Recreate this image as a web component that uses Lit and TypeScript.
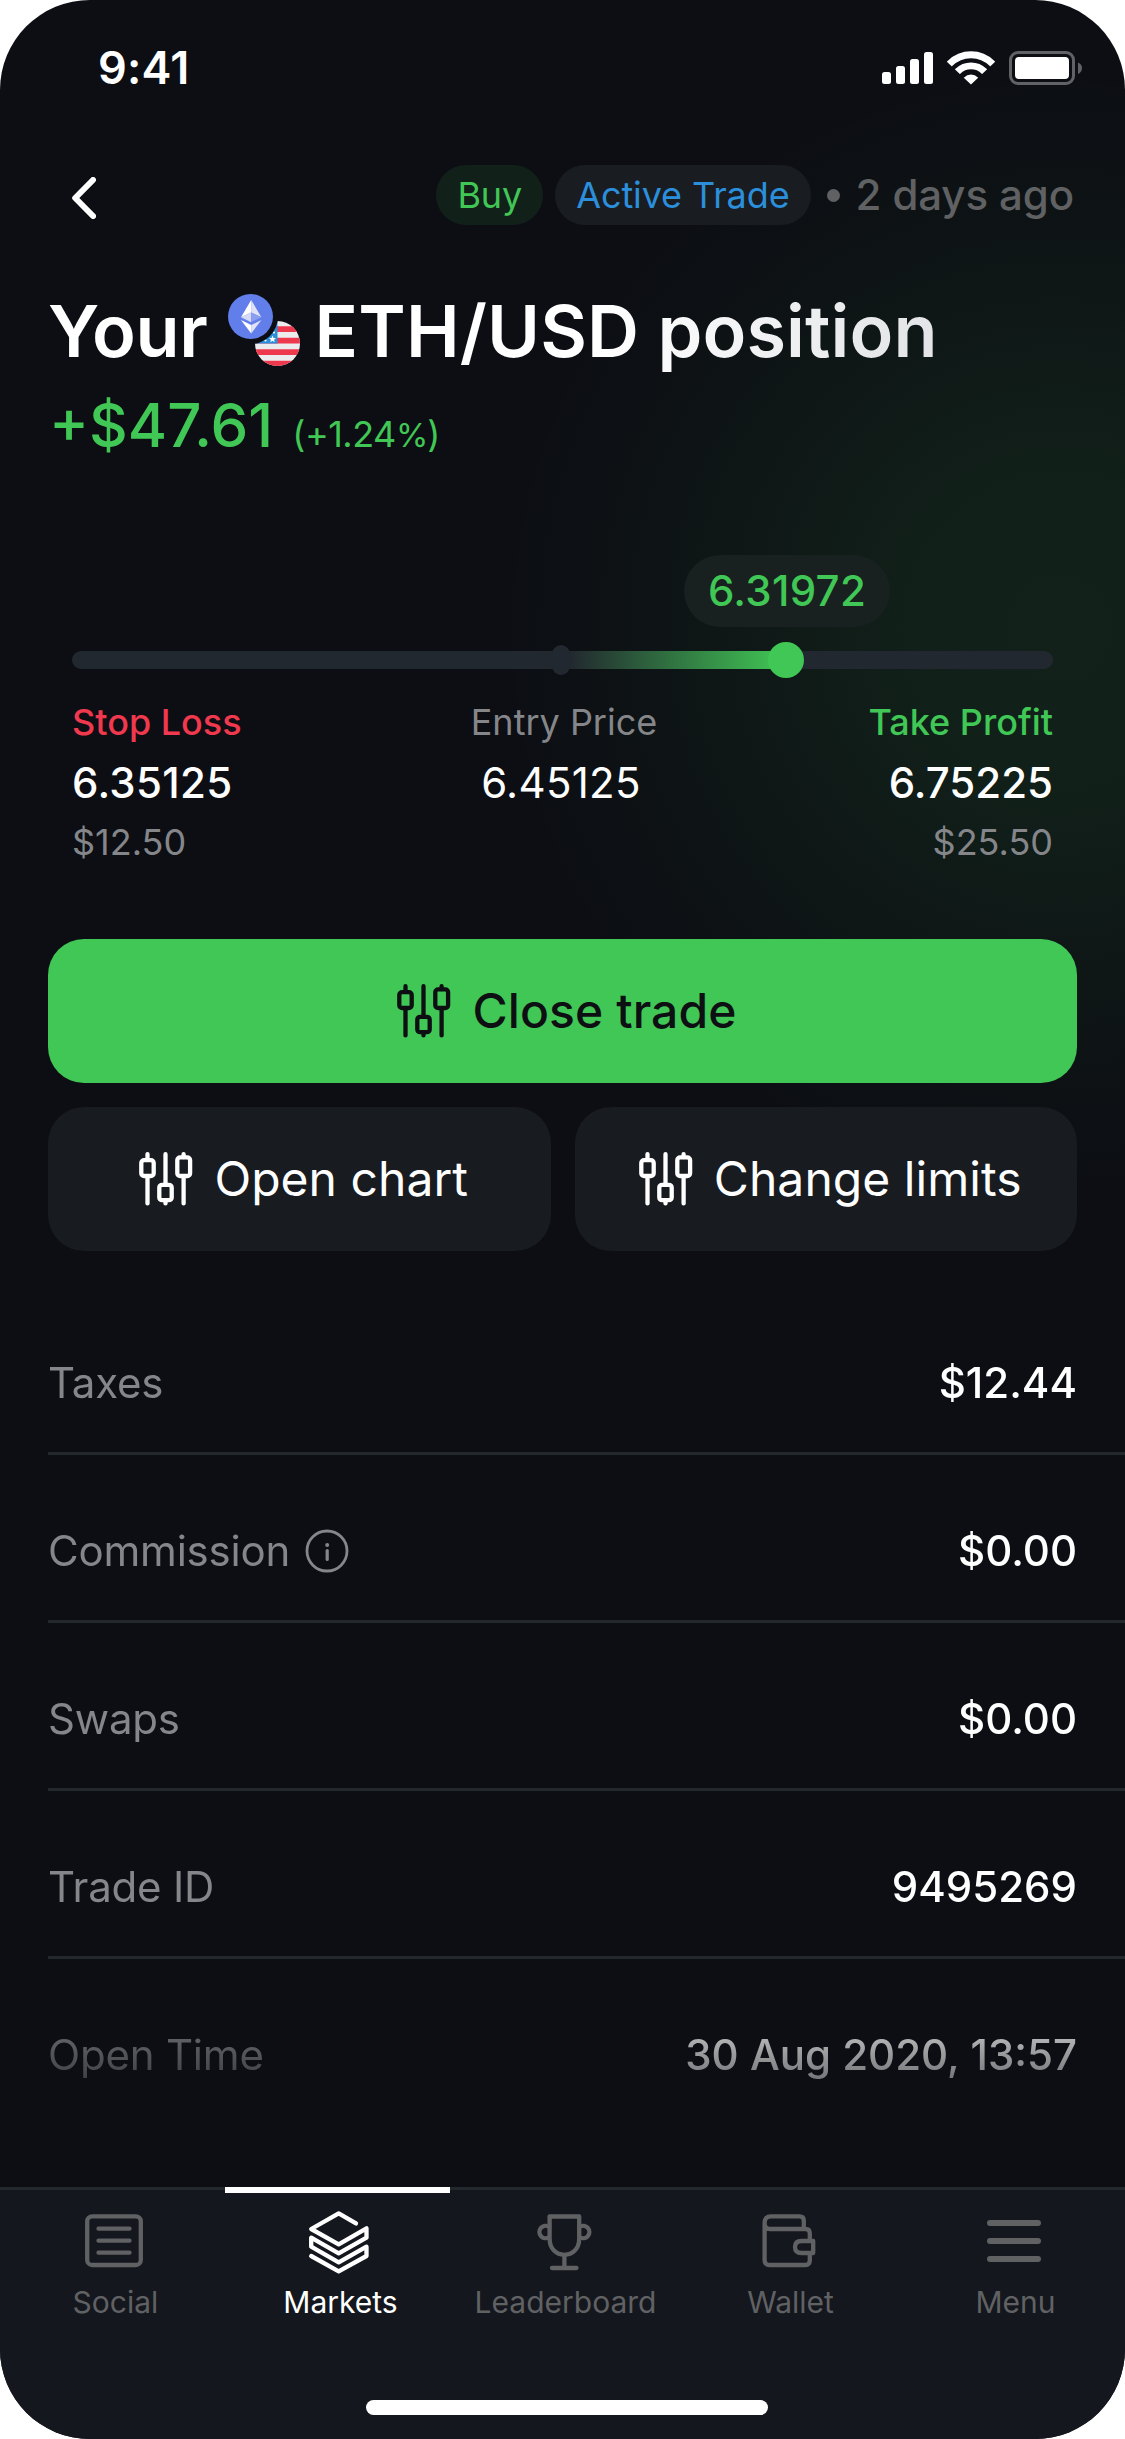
import { LitElement, html, css, svg } from "lit";
import { customElement, property } from "lit/decorators.js";
import { classMap } from "lit/directives/class-map.js";

const fontStack = css`Inter, "Liberation Sans", sans-serif`;

interface DetailRow {
  label: string;
  value: string;
  info?: boolean;
}

const rows: DetailRow[] = [
  { label: "Taxes", value: "$12.44" },
  { label: "Commission", value: "$0.00", info: true },
  { label: "Swaps", value: "$0.00" },
  { label: "Trade ID", value: "9495269" },
  { label: "Open Time", value: "30 Aug 2020, 13:57" },
];

const tabIcons: Record<string, unknown> = {
  Social: svg`
    <rect x="3.2" y="5.4" width="53.6" height="48.6" rx="5"/>
    <path d="M14.5 17.7H45.5M14.5 29.7H45.5M14.5 41.7H45.5"/>`,
  Markets: svg`
    <path d="M47 12.4 29.7 2.3 2.2 18 29.7 33.3 57.5 17.3V26.7L29.7 42.3 2.2 26.7V35.7L29.7 51.3 57.5 35.7V45L29.7 60.3 2.2 45"/>`,
  Leaderboard: svg`
    <path d="M15.6 5.5H45.2V27.5C45.2 38 38.5 43.8 30.4 43.8S15.6 38 15.6 27.5ZM30.4 44V57M18 57H42.5"/>
    <path d="M15 26.2A6.2 6.2 0 1 1 15 15.8M45.8 26.2A6.2 6.2 0 1 0 45.8 15.8"/>`,
  Wallet: svg`
    <path d="M5.6 12V49Q5.6 54 10.6 54H46.5Q50.8 54 50.8 49.5V44.5M5.6 12Q5.6 5.4 12 5.4H40.5Q44.8 5.4 44.8 9.7V17.6M5.6 12Q5.6 18 11 18H46.5Q50.8 18 50.8 22.3V28"/>
    <path d="M54.2 30H42.5Q36 30 36 36T42.5 42H54.2Z"/>`,
  Menu: svg`<path stroke-width="6" d="M6 12H54M6 30H54M6 48H54"/>`,
};

@customElement("sliders-icon")
class SlidersIcon extends LitElement {
  static styles = css`
    :host { display: block; width: 54px; height: 54px; }
    .icon { display: block; overflow: visible; }
  `;
  render() {
    return html`<svg class="icon" width="54" height="54" viewBox="0 0 54 54" fill="none"
      stroke="currentColor" stroke-width="4.3" stroke-linecap="round">
      <rect x="2.3" y="8.2" width="12.4" height="15.8" rx="2.8"/>
      <rect x="20.3" y="32.8" width="12.4" height="15.4" rx="2.8"/>
      <rect x="38.3" y="5.4" width="12.8" height="18.6" rx="2.8"/>
      <path d="M8.5 2.2V7M8.5 25V51.4M26.5 2.2V32M26.5 49V51.4M44.6 2.2V5M44.6 25V51.4"/>
    </svg>`;
  }
}

@customElement("trade-button")
class TradeButton extends LitElement {
  @property() label = "";
  @property({ type: Boolean }) primary = false;
  static styles = css`
    :host { display: block; flex: 1; }
    .button {
      display: flex; align-items: center; justify-content: center; gap: 21px;
      width: 100%; height: 144px; border: 0; border-radius: 36px; padding: 0 0 0 9px;
      background: #181b20; color: #fff;
      font: 400 48px/60px ${fontStack}; letter-spacing: 0.05px;
    }
    .primary { background: #41c755; color: #0d0f13; font-weight: 500; letter-spacing: 0.1px; }
  `;
  render() {
    return html`<button class=${classMap({ button: true, primary: this.primary })}>
      <sliders-icon></sliders-icon><span>${this.label}</span>
    </button>`;
  }
}

@customElement("price-range")
class PriceRange extends LitElement {
  static styles = css`
    :host { display: block; }
    .track { position: relative; height: 18px; border-radius: 9px; background: #22282f; }
    .notch {
      position: absolute; left: 480px; top: -6px; width: 18px; height: 30px;
      border-radius: 9px; background: #22282f;
    }
    .fill {
      position: absolute; left: 498px; top: 0; width: 216px; height: 18px;
      background: linear-gradient(90deg, rgba(65, 199, 85, 0), #41c755);
    }
    .knob {
      position: absolute; left: 696px; top: -9px; width: 36px; height: 36px;
      border-radius: 50%; background: #41c755;
    }
    .bubble {
      position: absolute; left: 612px; top: -96px; width: 206px; height: 72px;
      border-radius: 36px; background: #18211f; color: #41c755; letter-spacing: 0.3px;
      font-size: 42px; font-weight: 500; line-height: 72px; text-align: center;
    }
    .labels { display: grid; grid-template-columns: 1fr auto 1fr; margin-top: 31px; }
    .col { display: flex; flex-direction: column; gap: 13px; }
    .mid { align-items: center; }
    .end { align-items: flex-end; }
    .name { font-size: 36px; line-height: 44px; font-weight: 500; }
    .loss { color: #f0384e; }
    .entry { color: #85868a; font-weight: 400; padding-left: 3px; }
    .profit { color: #41c755; }
    .price { font-size: 42px; line-height: 51px; font-weight: 500; color: #fff; letter-spacing: 0.3px; }
    .light { font-weight: 400; padding-right: 3px; }
    .end .price { letter-spacing: 0; }
    .money { font-size: 36px; line-height: 42px; color: #85868a; }
  `;
  render() {
    return html`
      <div class="track">
        <div class="fill"></div><div class="notch"></div><div class="knob"></div>
        <div class="bubble">6.31972</div>
      </div>
      <div class="labels">
        <div class="col"><span class="name loss">Stop Loss</span><span class="price">6.35125</span><span class="money">$12.50</span></div>
        <div class="col mid"><span class="name entry">Entry Price</span><span class="price light">6.45125</span></div>
        <div class="col end"><span class="name profit">Take Profit</span><span class="price">6.75225</span><span class="money">$25.50</span></div>
      </div>`;
  }
}

@customElement("tab-bar")
class TabBar extends LitElement {
  @property() active = "Markets";
  static styles = css`
    :host { display: block; }
    .bar {
      height: 249px; border-top: 3px solid #22282c; background: #14171e;
      display: flex; flex-direction: column; justify-content: space-between; align-items: center;
    }
    .tabs { display: grid; grid-template-columns: repeat(5, 1fr); width: 100%; }
    .tab {
      position: relative; display: flex; flex-direction: column; align-items: center; gap: 11px;
      padding: 21px 0 0 3px; color: #606163; font-size: 30px; line-height: 36px;
    }
    .active { color: #fff; }
    .active::before {
      content: ""; position: absolute; left: 0; right: 0; top: -3px; height: 6px; background: #fff;
    }
    .icon { display: block; overflow: visible; }
    .name { padding-left: 3px; }
    .home { width: 402px; height: 15px; margin: 0 0 24px 9px; border-radius: 7.5px; background: #fff; }
  `;
  render() {
    return html`<nav class="bar">
      <div class="tabs">
        ${Object.entries(tabIcons).map(([name, icon]) => html`
          <div class=${classMap({ tab: true, active: name === this.active })}>
            <svg class="icon" width="60" height="62" viewBox="0 0 60 62" fill="none" stroke="currentColor"
              stroke-width="4.3" stroke-linecap="round" stroke-linejoin="round">${icon}</svg>
            <span class="name">${name}</span>
          </div>`)}
      </div>
      <div class="home"></div>
    </nav>`;
  }
}

@customElement("app-root")
class AppRoot extends LitElement {
  static styles = css`
    :host { display: block; background: #fff; font-family: ${fontStack}; }
    .screen {
      display: flex; flex-direction: column; box-sizing: border-box;
      width: 1125px; height: 2439px; border-radius: 90px; overflow: hidden; color: #fff;
      background:
        radial-gradient(circle 560px at 1060px 630px,
          rgba(65, 199, 85, 0.1), rgba(65, 199, 85, 0.095) 28%, rgba(65, 199, 85, 0.055) 55%,
          rgba(65, 199, 85, 0.018) 80%, rgba(65, 199, 85, 0)),
        #0c0e13;
    }
    .status {
      display: flex; align-items: center; justify-content: space-between;
      height: 136px; padding: 0 43px 0 98px;
    }
    .clock { font-size: 45px; font-weight: 600; line-height: 54px; letter-spacing: 0.2px; }
    .icon { display: block; }
    .head { display: flex; align-items: center; height: 118px; padding: 0 51px 0 72px; }
    .back { margin: 6px auto 0 0; }
    .pill {
      height: 60px; padding: 0 21px; border-radius: 30px;
      font-size: 36px; line-height: 60px; letter-spacing: -0.1px;
    }
    .buy { background: #12201a; color: #41c755; margin-right: 12px; }
    .state { background: #191d22; color: #2b8fdb; }
    .dot { width: 13px; height: 13px; border-radius: 50%; background: #606163; margin: 0 16px; }
    .age { font-size: 42px; line-height: 60px; font-weight: 500; color: #606163; letter-spacing: -0.1px; }
    .title {
      display: flex; align-items: center; height: 91px; margin: 31px 0 0; padding-left: 48px;
      font-size: 72px; font-weight: 600; line-height: 91px;
    }
    .your { letter-spacing: -0.3px; }
    .pair { margin: 0 15px 1px 20px; }
    .fade {
      background: linear-gradient(90deg, #fff 45%, #e2e4e7); -webkit-background-clip: text;
      background-clip: text; color: transparent; letter-spacing: 0.1px;
    }
    .pnl {
      display: flex; align-items: baseline; gap: 19px; margin-top: 12px; padding-left: 49px;
      color: #41c755; font-size: 60px; font-weight: 500; line-height: 74px;
    }
    .percent { font-size: 36px; font-weight: 400; letter-spacing: -0.5px; }
    .sign { font-size: 33px; letter-spacing: -1px; }
    .range { margin: 179px 72px 0; }
    .actions { display: flex; flex-direction: column; gap: 24px; padding: 76px 48px 0; }
    .pairrow { display: flex; gap: 24px; }
    .details {
      margin: 36px 0 0 48px;
      -webkit-mask-image: linear-gradient(#000 700px, transparent 863px);
      mask-image: linear-gradient(#000 700px, transparent 863px);
    }
    .row {
      display: flex; align-items: center; justify-content: space-between; box-sizing: border-box;
      height: 168px; padding: 27px 48px 0 0; border-bottom: 3px solid #22282c;
      font-size: 42px; line-height: 50px;
    }
    .row:last-child { border-bottom-color: transparent; }
    .label { display: flex; align-items: center; gap: 15px; color: #85868a; letter-spacing: -0.2px; }
    .value { font-weight: 500; }
    .nav { margin-top: auto; }
  `;

  private statusIcons() {
    return html`<svg class="icon" width="200" height="34" viewBox="0 0 200 34" fill="#fff">
      <rect x="0" y="21" width="9" height="12" rx="2.5"/>
      <rect x="14" y="15" width="9" height="18" rx="2.5"/>
      <rect x="28" y="8" width="9" height="25" rx="2.5"/>
      <rect x="42" y="1" width="9" height="32" rx="2.5"/>
      <clipPath id="fan"><path d="M89 33.4 53-.4H125Z"/></clipPath>
      <g clip-path="url(#fan)">
        <circle cx="89" cy="33.4" r="29.7" fill="none" stroke="#fff" stroke-width="7"/>
        <circle cx="89" cy="33.4" r="18.6" fill="none" stroke="#fff" stroke-width="6.8"/>
        <circle cx="89" cy="33.4" r="9.8"/>
      </g>
      <rect x="128.5" y="1.5" width="63" height="31" rx="7.5" fill="none" stroke="#616265" stroke-width="3"/>
      <rect x="133" y="6" width="54" height="22" rx="4"/>
      <path d="M196 11.5Q200 13 200 17T196 23Z" fill="#616265"/>
    </svg>`;
  }

  private pairIcon() {
    return html`<svg class="icon pair" width="72" height="72" viewBox="0 0 72 72">
      <mask id="cut"><rect width="72" height="72" fill="#fff"/><circle cx="22.5" cy="22.5" r="27.5" fill="#000"/></mask>
      <clipPath id="disc"><circle cx="49.5" cy="49.5" r="22.5"/></clipPath>
      <g mask="url(#cut)"><g clip-path="url(#disc)">
        <rect x="27" y="27" width="45" height="45" fill="#ececee"/>
        <path d="M27 32.3H72V38H27ZM27 43.8H72V49.5H27ZM27 55.2H72V61H27ZM27 66.8H72V72.5H27Z" fill="#ee384d"/>
        <rect x="27" y="27" width="22.5" height="22.5" fill="#2b8fdb"/>
        <path d="m44.5 41.5 1 2.4 2.5.2-1.9 1.6.6 2.5-2.2-1.4-2.2 1.4.6-2.5-1.9-1.6 2.5-.2Z" fill="#fff"/>
        <circle cx="46" cy="38.5" r="1.1" fill="#fff"/><circle cx="37.5" cy="46.5" r="1.1" fill="#fff"/>
      </g></g>
      <circle cx="22.5" cy="22.5" r="22.5" fill="#627eea"/>
      <path d="M23.2 6 13 23.2 23.2 18.5Z" fill="#fff"/>
      <path d="M23.2 6 33.4 23.2 23.2 18.5Z" fill="#dfe3f5"/>
      <path d="M13 23.2 23.2 18.5V28.2Z" fill="#d5dbf4"/>
      <path d="M33.4 23.2 23.2 18.5V28.2Z" fill="#8a9ff0"/>
      <path d="M13 26 23.2 31V39.5Z" fill="#fff"/>
      <path d="M33.4 26 23.2 31V39.5Z" fill="#dfe3f5"/>
    </svg>`;
  }

  render() {
    return html`<main class="screen">
      <div class="status"><span class="clock">9:41</span>${this.statusIcons()}</div>
      <header class="head">
        <svg class="icon back" width="24" height="42" viewBox="0 0 24 42" fill="none" stroke="#fff"
          stroke-width="6" stroke-linecap="round" stroke-linejoin="round"><path d="M21 3 3.2 21 21 39"/></svg>
        <span class="pill buy">Buy</span>
        <span class="pill state">Active Trade</span>
        <span class="dot"></span>
        <span class="age">2 days ago</span>
      </header>
      <h1 class="title"><span class="your">Your</span>${this.pairIcon()}<span class="fade">ETH/USD position</span></h1>
      <div class="pnl"><span>+$47.61</span><span class="percent">(+1.24<span class="sign">%</span>)</span></div>
      <price-range class="range"></price-range>
      <section class="actions">
        <trade-button primary label="Close trade"></trade-button>
        <div class="pairrow">
          <trade-button label="Open chart"></trade-button>
          <trade-button label="Change limits"></trade-button>
        </div>
      </section>
      <section class="details">
        ${rows.map((row) => html`<div class="row">
          <span class="label">${row.label}${row.info
            ? html`<svg class="icon" width="44" height="44" viewBox="0 0 44 44" fill="none" stroke="#85868a"
                stroke-width="2.8" stroke-linecap="round"><circle cx="22" cy="22" r="20"/>
                <path d="M22.2 21.5V30.5" stroke-width="3.2"/><circle cx="22.2" cy="16" r="2" fill="#85868a" stroke="none"/></svg>`
            : ""}</span>
          <span class="value">${row.value}</span>
        </div>`)}
      </section>
      <tab-bar class="nav" active="Markets"></tab-bar>
    </main>`;
  }
}
